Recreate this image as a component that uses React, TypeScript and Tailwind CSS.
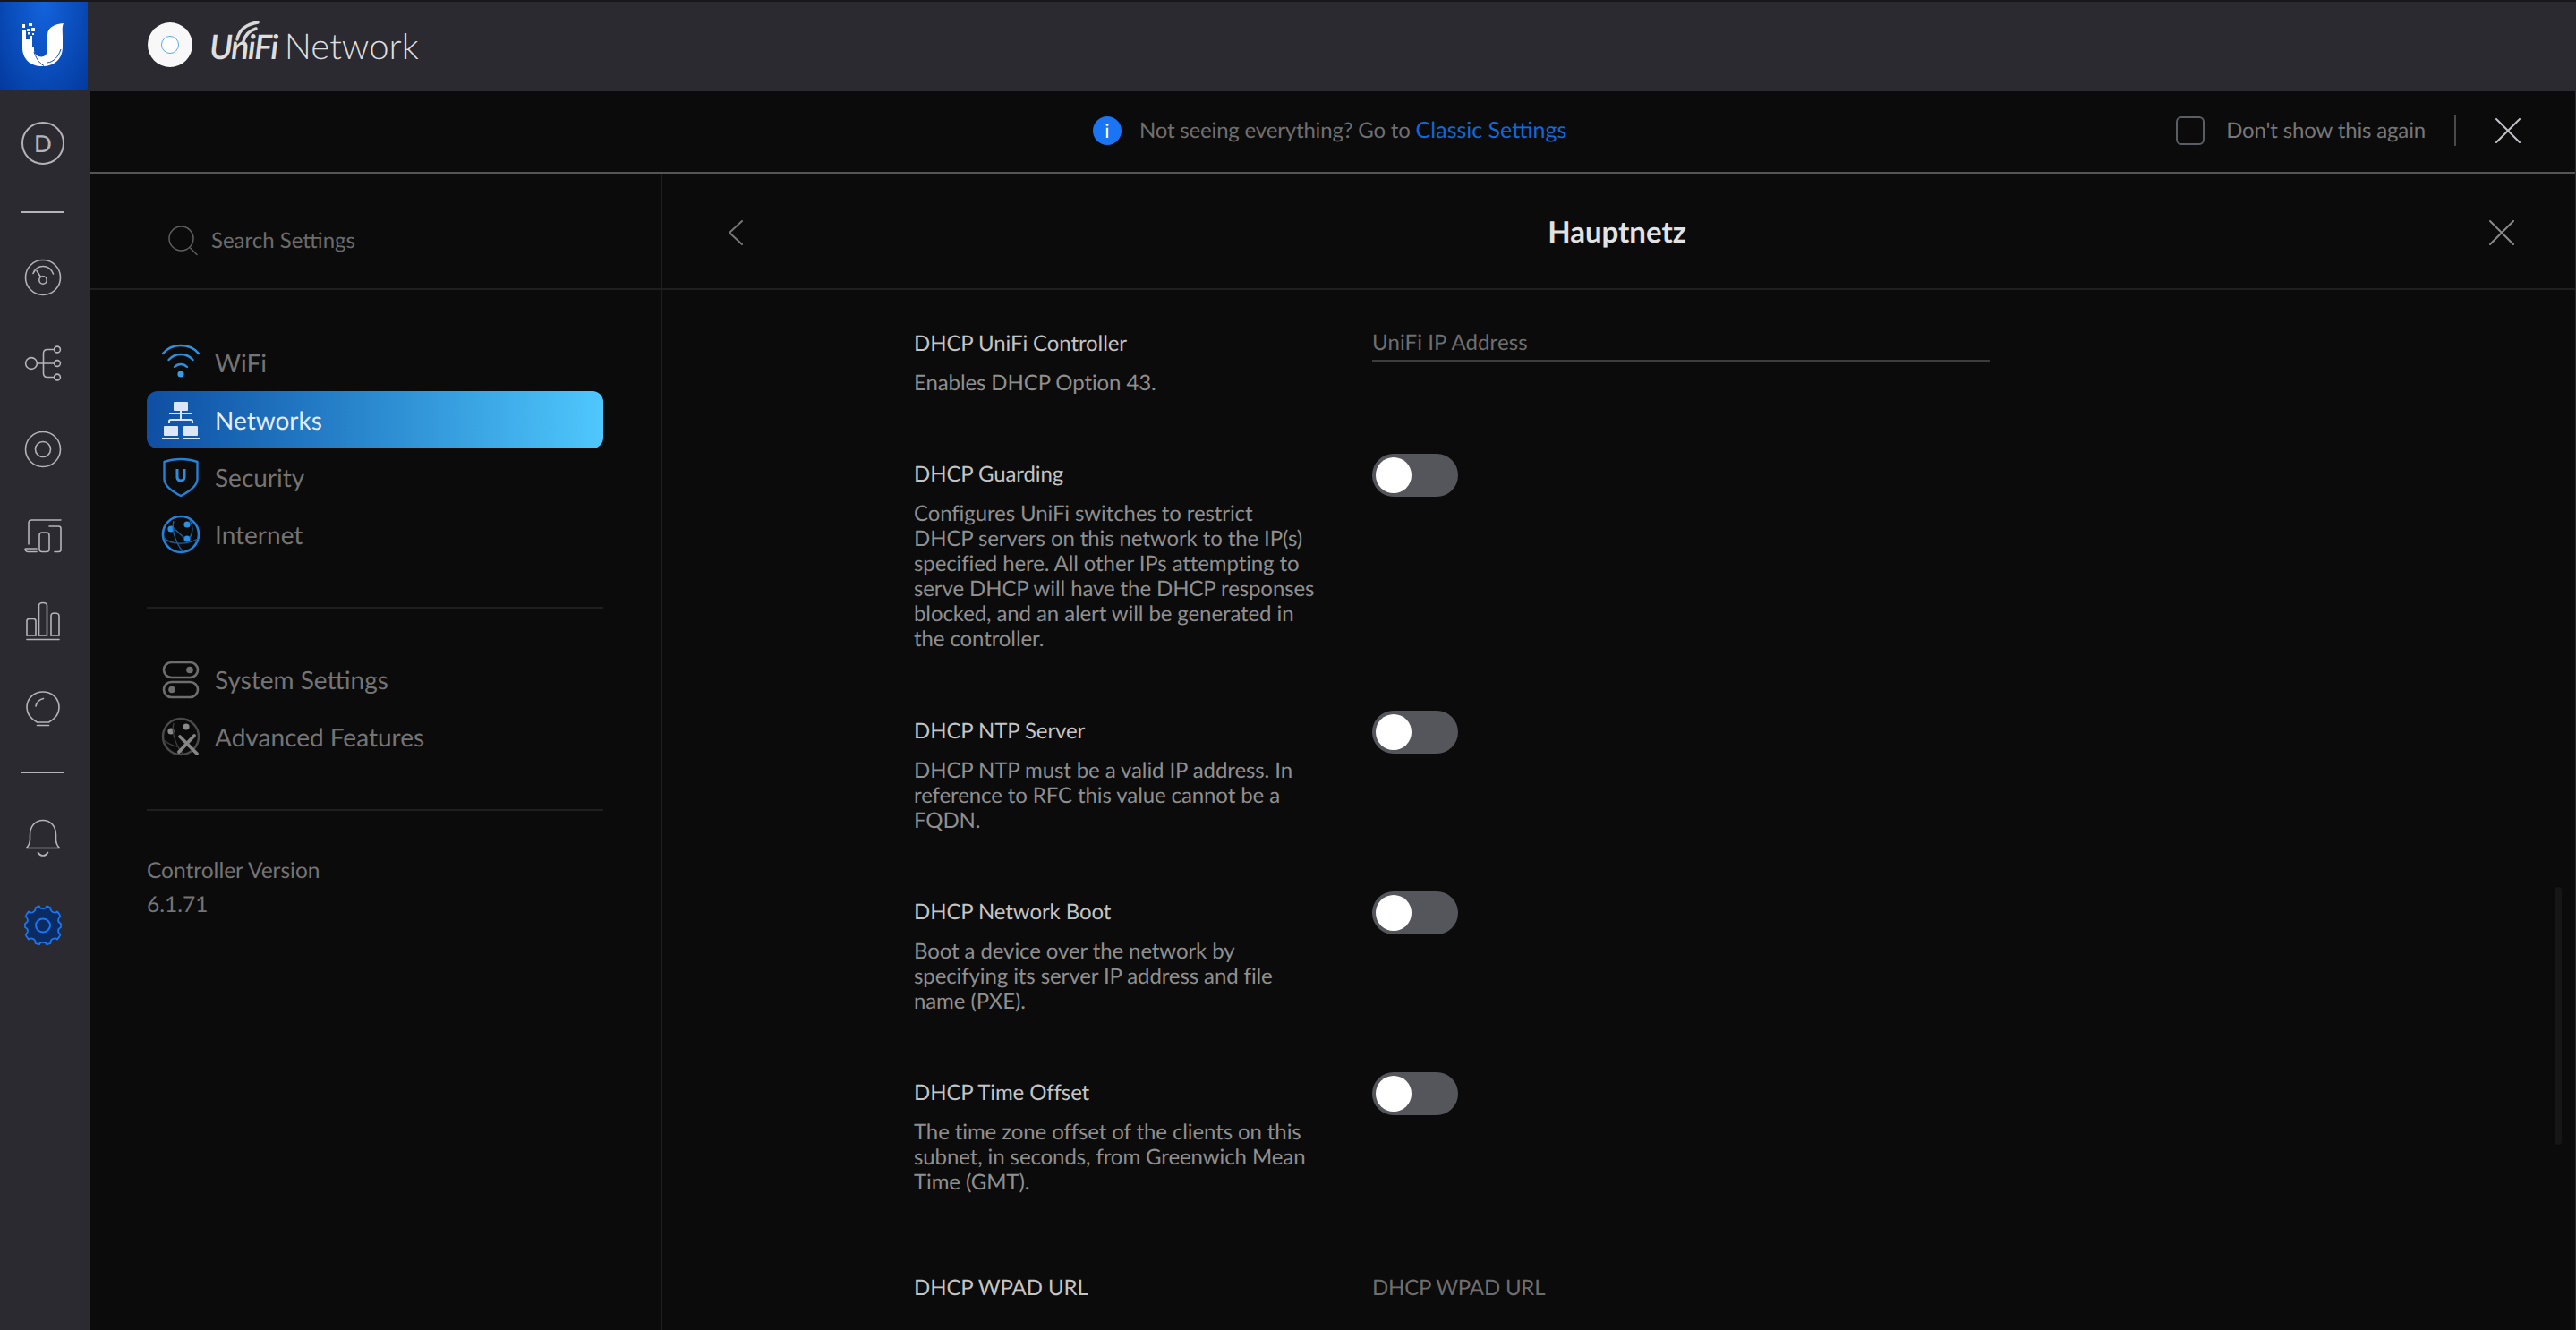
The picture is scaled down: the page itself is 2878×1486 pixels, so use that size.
import React from "react";

function Ic({ size, children, className = "" }: { size: number; children: React.ReactNode; className?: string }) {
  return (
    <svg width={size} height={size} viewBox={`0 0 ${size} ${size}`} fill="none" className={"shrink-0 " + className}>
      {children}
    </svg>
  );
}

const S = "#b4b4b8";

function RailIcons({ kind }: { kind: string }) {
  const p = { stroke: S, strokeWidth: 1.6, fill: "none", strokeLinecap: "round" as const, strokeLinejoin: "round" as const };
  switch (kind) {
    case "speed":
      return (
        <Ic size={48}>
          <circle cx="24" cy="24" r="19.5" {...p} />
          <circle cx="24" cy="27" r="4.2" {...p} />
          <path d="M21.5 23.5 17 16.5" {...p} />
          <path d="M13 19.5C15 14.5 19 11.5 24 11.5C29.5 11.5 33.5 15 35.5 20" {...p} />
        </Ic>
      );
    case "topology":
      return (
        <Ic size={48}>
          <circle cx="11" cy="24" r="6.4" {...p} />
          <circle cx="40" cy="8.5" r="3.4" {...p} />
          <circle cx="40" cy="24" r="3.4" {...p} />
          <circle cx="40" cy="39.5" r="3.4" {...p} />
          <path d="M17.5 24H36.5M36.5 8.5H29C26 8.5 24.5 10.5 24.5 13V35C24.5 37.5 26 39.5 29 39.5H36.5" {...p} />
        </Ic>
      );
    case "circles":
      return (
        <Ic size={48}>
          <circle cx="24" cy="24" r="19.5" {...p} />
          <circle cx="24" cy="24" r="8.5" {...p} />
        </Ic>
      );
    case "devices":
      return (
        <Ic size={48}>
          <path d="M8 34V10.5C8 8.5 9.5 7 11.5 7H44" {...p} />
          <path d="M17 39H4.5C4 39 4 41 5 41.5C5.5 42 6 42.5 7 42.5H17" {...p} />
          <rect x="20" y="21" width="11" height="21.5" rx="3" {...p} />
          <path d="M31 14H41.5C43 14 44 15 44 16.5V40C44 41.5 43 42.5 41.5 42.5H37" {...p} />
        </Ic>
      );
    case "stats":
      return (
        <Ic size={48}>
          <path d="M6 40V24C6 22.5 7 21.5 8.5 21.5H13.5C15 21.5 16 22.5 16 24V40" {...p} />
          <path d="M19.5 40V6.5C19.5 5 21 3.5 24 3.5C27 3.5 28.5 5 28.5 6.5V40" {...p} />
          <path d="M33 40V18C33 16 34.5 15 37 15C40 15 42 16 42 18V40" {...p} />
          <path d="M6 40H16M19.5 40H28.5M33 40H42M6 44.5H42" {...p} />
        </Ic>
      );
    case "bulb":
      return (
        <Ic size={48}>
          <path d="M17.5 41C10 37 6 31.5 6 24.5C6 14 14 7 24 7C34 7 42 14 42 24.5C42 31.5 38 37 30.5 41Z" {...p} />
          <path d="M16 23C17 18 20 15.5 24.5 14.5" {...p} />
          <path d="M17.5 44.5H30.5" {...p} />
        </Ic>
      );
    case "bell":
      return (
        <Ic size={48}>
          <path d="M5.5 35.5C8 33 9.5 30.5 9.5 26V21C9.5 11 15.5 4.5 24 4.5C32.5 4.5 38.5 11 38.5 21V26C38.5 30.5 40 33 42.5 35.5Z" {...p} />
          <path d="M18.5 40.5C20 43 22 44 24 44C26 44 28 43 29.5 40.5" {...p} />
        </Ic>
      );
    default:
      return (
        <Ic size={48}>
          <path
            d="M20 4.5C20 6.5 21 7 24 7C27 7 28 6.5 28 4.5C29.5 4.8 31 5.4 32.5 6.2C32 8.5 33 10 35 11C37 12 38.5 12 40 10.5C41.5 12 42.8 14 43.5 16C41.8 17 41 18.3 41 20C41 21.7 42 23 44 24V28C42 29 41 30.3 41 32C41 33.7 41.8 35 43.5 36C42.8 38 41.5 40 40 41.5C38.5 40 37 40 35 41C33 42 32 43.5 32.5 45.8C31 46.4 29.5 47 28 47.3C28 45.3 27 44.8 24 44.8C21 44.8 20 45.3 20 47.3C18.5 47 17 46.4 15.5 45.8C16 43.5 15 42 13 41C11 40 9.5 40 8 41.5C6.5 40 5.2 38 4.5 36C6.2 35 7 33.7 7 32C7 30.3 6 29 4 28V24C6 23 7 21.7 7 20C7 18.3 6.2 17 4.5 16C5.2 14 6.5 12 8 10.5C9.5 12 11 12 13 11C15 10 16 8.5 15.5 6.2C17 5.4 18.5 4.8 20 4.5Z"
            fill="#0b2c63"
            stroke="#1a76f2"
            strokeWidth="1.8"
            strokeLinejoin="round"
          />
          <ellipse cx="24" cy="26" rx="8" ry="7.5" stroke="#1a76f2" strokeWidth="2" fill="#0b2c63" />
        </Ic>
      );
  }
}

function NavIcon({ kind }: { kind: string }) {
  const blue = "#2e8fdc";
  const gray = "#6e6e6e";
  switch (kind) {
    case "wifi":
      return (
        <Ic size={44}>
          <path d="M2 12C7 6 14 3 22 3C30 3 37 6 42 12" stroke="#2a92e0" strokeWidth="2.4" strokeLinecap="round" />
          <path d="M8.5 19C12 15 17 13 22 13C27 13 32 15 35.5 19" stroke={blue} strokeWidth="2.4" strokeLinecap="round" />
          <path d="M15 27C17 25 19.5 24 22 24C24.5 24 27 25 29 27" stroke={blue} strokeWidth="2.4" strokeLinecap="round" />
          <circle cx="22" cy="35" r="3.6" fill="#3a9be0" />
        </Ic>
      );
    case "networks":
      return (
        <Ic size={44}>
          <rect x="14" y="2" width="16" height="10" rx="1" fill="#dbe6f6" />
          <path d="M9 15H35M22 12V22M9 26V23.5C9 22.5 10 22 11 22H33C34 22 35 22.5 35 23.5V26" stroke="#dbe6f6" strokeWidth="2" />
          <rect x="3" y="29" width="16" height="11" rx="1" fill="#dbe6f6" />
          <rect x="25" y="29" width="16" height="11" rx="1" fill="#dbe6f6" />
          <path d="M1 43H20M24 43H43" stroke="#dbe6f6" strokeWidth="2" />
        </Ic>
      );
    case "security":
      return (
        <Ic size={44}>
          <path d="M3.5 5C9 3 15 2 22 2C29 2 35 3 40.5 5V24C40.5 31 32 38 22 43C12 38 3.5 31 3.5 24Z" stroke="#2481d6" strokeWidth="2.4" strokeLinejoin="round" />
          <path d="M16.5 13V22C16.5 25.5 18.8 27.5 22 27.5C25.2 27.5 27.5 25.5 27.5 22V13H24.5V22C24.5 23.5 23.5 24.5 22 24.5C20.5 24.5 19.5 23.5 19.5 22V13Z" fill="#2f8cdc" />
        </Ic>
      );
    case "internet":
      return (
        <Ic size={44}>
          <circle cx="22" cy="22" r="20" stroke="#2182dc" strokeWidth="2.6" />
          <circle cx="11" cy="16" r="3.6" fill="#2d8fe2" />
          <circle cx="29" cy="11" r="3.6" fill="#2d8fe2" />
          <circle cx="29" cy="27" r="3.6" fill="#2d8fe2" />
          <path d="M16 17L26 26M14 7C12 15 14 28 24 41M3 26C12 34 28 34 41 27M32 6C36 12 36 20 32 26" stroke="#1f5f9c" strokeWidth="1.4" />
        </Ic>
      );
    case "system":
      return (
        <Ic size={44}>
          <rect x="3" y="3" width="38" height="17" rx="8.5" stroke={gray} strokeWidth="2.6" />
          <circle cx="32" cy="11.5" r="3.8" fill={gray} />
          <rect x="3" y="25" width="38" height="17" rx="8.5" stroke={gray} strokeWidth="2.6" />
          <circle cx="12" cy="33.5" r="3.8" fill={gray} />
        </Ic>
      );
    default:
      return (
        <Ic size={44}>
          <circle cx="22" cy="22" r="20" stroke="#4a4a4a" strokeWidth="2.4" />
          <circle cx="11" cy="16" r="3.6" fill="#8a8a8a" />
          <circle cx="28" cy="11" r="3.6" fill="#8a8a8a" />
          <path d="M14 7C12 15 14 28 24 41M3 26C8 30 12 32 18 33" stroke="#3e3e3e" strokeWidth="1.4" />
          <path d="M21 22L40 41M37 21L20 39" stroke="#858585" strokeWidth="3.8" strokeLinecap="round" />
        </Ic>
      );
  }
}

function NavRow({ kind, label, active }: { kind: string; label: string; active?: boolean }) {
  return (
    <div
      className={
        "h-16 flex items-center pl-[16px] gap-[16px] rounded-[12px] text-[28px] " +
        (active ? "bg-gradient-to-r from-[#0f4ea3] to-[#4fc8fd] text-[#e4ecfa]" : "text-[#747474]")
      }
    >
      <NavIcon kind={kind} />
      <span>{label}</span>
    </div>
  );
}

function Toggle() {
  return (
    <div className="w-[96px] h-[48px] rounded-full bg-[#55565c] flex items-center pl-[4px] -mt-[9px]">
      <div className="w-[40px] h-[40px] rounded-full bg-white" />
    </div>
  );
}

function SettingRow({
  title,
  lines,
  right,
  pb = "pb-[74px]",
}: {
  title: string;
  lines: string[];
  right: React.ReactNode;
  pb?: string;
}) {
  return (
    <div className={"grid grid-cols-[512px_690px] " + pb}>
      <div>
        <div className="text-[24px] leading-[28px] text-[#c4c4c4] mb-[16px] tracking-[-0.1px]">{title}</div>
        <div className="text-[24px] leading-[28px] text-[#8f8f8f] tracking-[-0.1px]">
          {lines.map((l) => (
            <div key={l} className="whitespace-nowrap">
              {l}
            </div>
          ))}
        </div>
      </div>
      <div>{right}</div>
    </div>
  );
}

function X({ size, color, sw }: { size: number; color: string; sw: number }) {
  return (
    <svg width={size} height={size} viewBox="0 0 28 28" fill="none">
      <path d="M1 1L27 27M27 1L1 27" stroke={color} strokeWidth={sw} strokeLinecap="round" />
    </svg>
  );
}

export default function App() {
  return (
    <div className="w-[2878px] h-[1486px] overflow-hidden flex flex-col bg-[#0b0b0c] font-['Lato','Liberation_Sans',sans-serif] [text-rendering:geometricPrecision]">
      <header className="h-[102px] shrink-0 flex bg-[#2a2a30] border-t-2 border-t-[#17171c]">
        <div className="w-[98px] h-[98px] bg-[radial-gradient(ellipse_at_50%_0%,#1363dc_0%,#0a4dbb_55%,#03399d_100%)] flex items-center justify-center">
          <svg width="48" height="50" viewBox="0 0 48 50" fill="none">
            <path d="M0 7H4V18H8V14H11V26H13V30C13 34 17 37.5 21 37.5C25 37.5 28 34 28 30V13C28 5 35 1 46 0C44 4 45 10 45 14V26C45 40 36 48 22 48C9 48 0 40 0 27Z" fill="#fff" />
            <path d="M13 32C15 38 18 44 24 47.5M28 44C35 43 40 38 43 29" stroke="#0b4bb4" strokeWidth="1" />
            <rect x="0" y="1" width="3" height="4" fill="#fff" />
            <rect x="7" y="0" width="4" height="3" fill="#fff" />
            <rect x="10" y="5" width="4" height="4" fill="#fff" />
            <rect x="5" y="6" width="3" height="3" fill="#fff" />
            <rect x="6" y="10" width="3" height="2.5" fill="#fff" />
            <rect x="11" y="11" width="2" height="2" fill="#fff" />
          </svg>
        </div>
        <div className="flex items-center pl-[67px] pb-[4px] relative">
          <div className="w-[50px] h-[50px] rounded-full bg-[#f8f8f8] flex items-center justify-center">
            <div className="w-[20px] h-[20px] rounded-full border-[1.5px] border-[#5aa8ef] bg-white" />
          </div>
          <div className="relative ml-[19px] mt-[2px] text-[#dedede] flex items-baseline">
            <svg className="absolute left-[28px] -top-[9px]" width="30" height="26" viewBox="0 0 30 26" fill="none">
              <path d="M3 22C5 12 13 5 26 3M10 24C12 17 17 12 24 10" stroke="#d8d8d8" strokeWidth="3.4" strokeLinecap="round" />
            </svg>
            <span className="italic font-semibold text-[38px] leading-none tracking-[-1.6px]">UniFi</span>
            <span className="font-light text-[40px] leading-none ml-[8px]">Network</span>
          </div>
        </div>
      </header>
      <div className="flex-1 flex min-h-0">
        <aside className="w-[100px] shrink-0 bg-[#2a2a30] flex flex-col items-center pt-[34px] pr-[4px]">
          <div className="w-[48px] h-[48px] rounded-full border-2 border-[#b4b4b8] flex items-center justify-center text-[26px] font-medium text-[#b4b4b8]">
            D
          </div>
          <div className="w-[48px] h-[2px] bg-[#b4b4b8] mt-[52px]" />
          <div className="mt-[48px] flex flex-col gap-[48px]">
            <RailIcons kind="speed" />
            <RailIcons kind="topology" />
            <RailIcons kind="circles" />
            <RailIcons kind="devices" />
            <RailIcons kind="stats" />
            <RailIcons kind="bulb" />
          </div>
          <div className="w-[48px] h-[2px] bg-[#b4b4b8] mt-[48px]" />
          <div className="mt-[48px] flex flex-col gap-[48px]">
            <RailIcons kind="bell" />
            <RailIcons kind="gear" />
          </div>
        </aside>
        <main className="flex-1 min-w-0 flex flex-col border-r border-r-[#2e2e2e]">
          <div className="h-[92px] shrink-0 border-b-2 border-b-[#555555] flex items-center relative text-[24px] pb-[2px]">
            <div className="flex items-center absolute left-[1121px]">
              <div className="w-[32px] h-[32px] rounded-full bg-[#1a75f5] text-white flex items-center justify-center text-[22px] font-normal leading-none">
                i
              </div>
              <span className="ml-[20px] text-[#6f6f6f] tracking-[-0.18px]">Not seeing everything? Go to</span>
              <span className="ml-[6px] text-[#1468d6] text-[25px]">Classic Settings</span>
            </div>
            <div className="ml-auto flex items-center text-[#777777]">
              <div className="w-[32px] h-[32px] rounded-[6px] border-2 border-[#5a5d63]" />
              <span className="ml-[24px] tracking-[-0.15px]">Don't show this again</span>
              <div className="w-[2px] h-[34px] bg-[#4a4a4a] ml-[32px]" />
              <div className="ml-[44px] mr-[61px]">
                <X size={28} color="#c0c0c6" sw={2} />
              </div>
            </div>
          </div>
          <div className="flex-1 flex min-h-0">
            <section className="w-[640px] shrink-0 border-r-2 border-r-[#1f1f1f] flex flex-col">
              <div className="h-[130px] shrink-0 border-b-2 border-b-[#1f1f1f] flex items-center pl-[88px] pt-[22px]">
                <svg width="34" height="34" viewBox="0 0 34 34" fill="none">
                  <circle cx="14.5" cy="14.5" r="13.5" stroke="#5f5f5f" strokeWidth="1.5" />
                  <path d="M24.5 25L32 32.5" stroke="#5f5f5f" strokeWidth="1.5" strokeLinecap="round" />
                </svg>
                <span className="ml-[14px] text-[24px] text-[#6b6b6b]">Search Settings</span>
              </div>
              <div className="px-[64px] pt-[49px]">
                <NavRow kind="wifi" label="WiFi" />
                <NavRow kind="networks" label="Networks" active />
                <NavRow kind="security" label="Security" />
                <NavRow kind="internet" label="Internet" />
                <div className="h-[2px] bg-[#1f1f1f] mt-[49px] mb-[47px]" />
                <NavRow kind="system" label="System Settings" />
                <NavRow kind="advanced" label="Advanced Features" />
                <div className="h-[2px] bg-[#1f1f1f] mt-[49px] mb-[48px]" />
                <div className="text-[24.5px] leading-[38px] text-[#747474]">
                  <div>Controller Version</div>
                  <div>6.1.71</div>
                </div>
              </div>
            </section>
            <section className="flex-1 min-w-0 flex flex-col relative">
              <div className="h-[130px] shrink-0 border-b-2 border-b-[#1f1f1f] flex items-center justify-between pl-[72px] pr-[68px] pt-[3px]">
                <svg width="20" height="30" viewBox="0 0 20 30" fill="none">
                  <path d="M17 2L3 15L17 28" stroke="#777" strokeWidth="2" strokeLinecap="round" strokeLinejoin="round" />
                </svg>
                <div className="text-[33px] font-bold text-[#e2e2e2]">Hauptnetz</div>
                <X size={28} color="#8a8a8a" sw={2} />
              </div>
              <div className="flex-1 min-h-0 overflow-hidden pl-[281px] pt-[46px]">
                <SettingRow
                  title="DHCP UniFi Controller"
                  lines={["Enables DHCP Option 43."]}
                  right={
                    <div className="h-[34px] border-b-2 border-b-[#3d3d3d] text-[24px] leading-[26px] text-[#6e6e6e] tracking-[0.1px]">UniFi IP Address</div>
                  }
                />
                <SettingRow
                  title="DHCP Guarding"
                  pb="pb-[75px]"
                  lines={[
                    "Configures UniFi switches to restrict",
                    "DHCP servers on this network to the IP(s)",
                    "specified here. All other IPs attempting to",
                    "serve DHCP will have the DHCP responses",
                    "blocked, and an alert will be generated in",
                    "the controller.",
                  ]}
                  right={<Toggle />}
                />
                <SettingRow
                  title="DHCP NTP Server"
                  lines={["DHCP NTP must be a valid IP address. In", "reference to RFC this value cannot be a", "FQDN."]}
                  right={<Toggle />}
                />
                <SettingRow
                  title="DHCP Network Boot"
                  lines={["Boot a device over the network by", "specifying its server IP address and file", "name (PXE)."]}
                  right={<Toggle />}
                />
                <SettingRow
                  title="DHCP Time Offset"
                  lines={["The time zone offset of the clients on this", "subnet, in seconds, from Greenwich Mean", "Time (GMT)."]}
                  right={<Toggle />}
                  pb="pb-[90px]"
                />
                <SettingRow
                  title="DHCP WPAD URL"
                  lines={[]}
                  right={<div className="text-[24px] leading-[28px] text-[#6e6e6e] tracking-[-0.2px]">DHCP WPAD URL</div>}
                />
              </div>
              <div className="absolute left-[2114px] top-[797px] w-[8px] h-[288px] rounded-full bg-[#161616]" />
            </section>
          </div>
        </main>
      </div>
    </div>
  );
}
